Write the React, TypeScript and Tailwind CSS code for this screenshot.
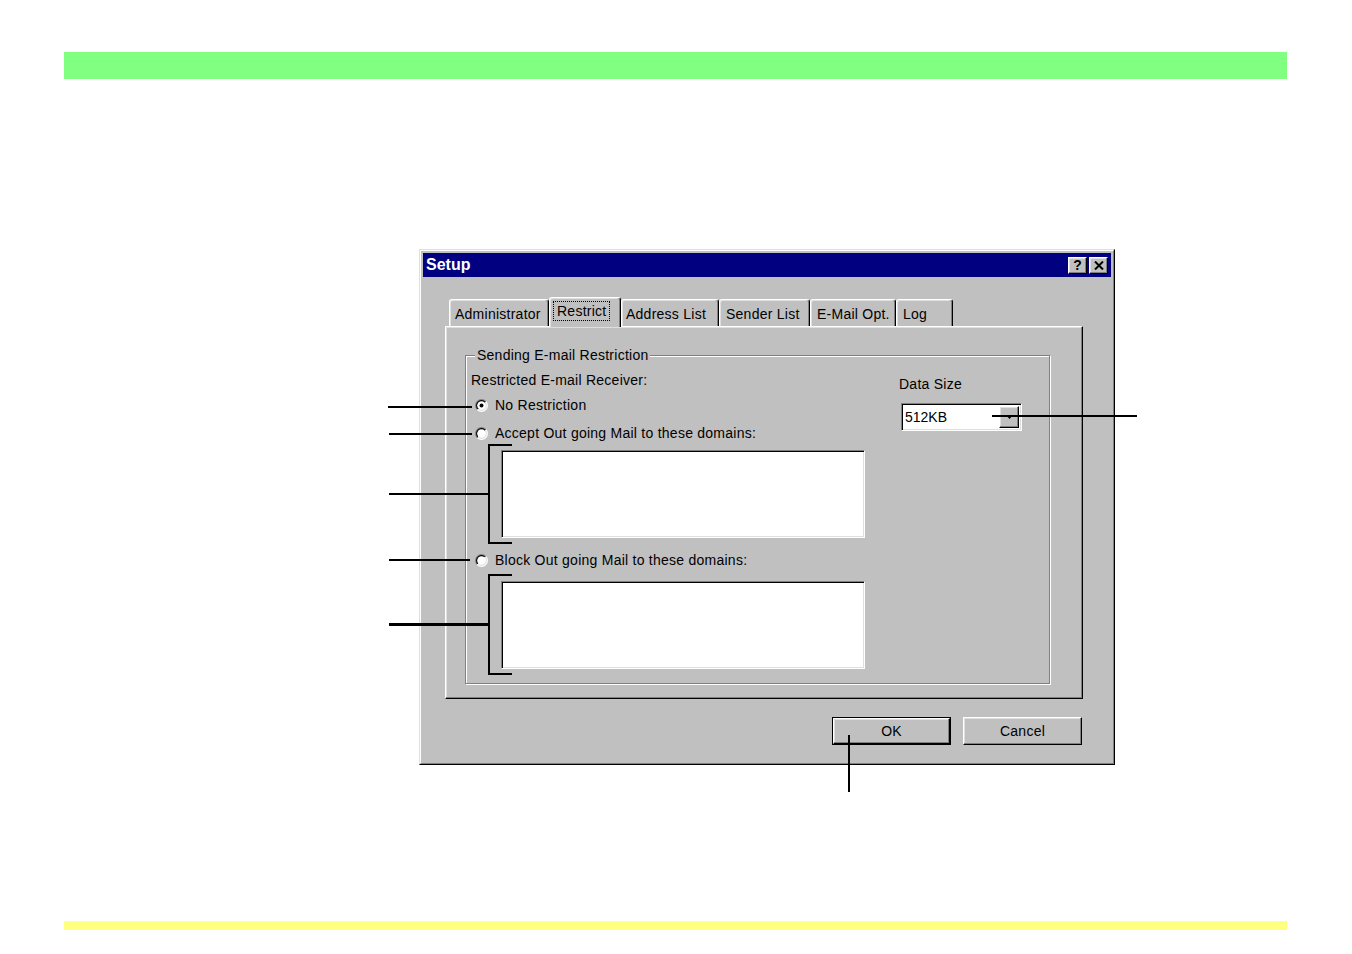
import { FC, ReactNode } from "react";

const raised = "border border-t-white border-l-white border-r-black border-b-black shadow-[inset_-1px_-1px_0_#808080,inset_1px_1px_0_#dfdfdf]";
const sunken = "border border-t-[#808080] border-l-[#808080] border-r-white border-b-white shadow-[inset_1px_1px_0_#000,inset_-1px_-1px_0_#dfdfdf]";

const Radio: FC<{ checked?: boolean; label: string }> = ({ checked = false, label }) => (
  <div className="flex items-center h-[20px]">
    <svg width="13" height="13" viewBox="0 0 12 12" className="ml-[4px] shrink-0">
      <defs>
        <linearGradient id="radio-outer" x1="0" y1="0" x2="1" y2="1">
          <stop offset="0.5" stopColor="#808080" />
          <stop offset="0.5" stopColor="#ffffff" />
        </linearGradient>
        <linearGradient id="radio-inner" x1="0" y1="0" x2="1" y2="1">
          <stop offset="0.5" stopColor="#000000" />
          <stop offset="0.5" stopColor="#dfdfdf" />
        </linearGradient>
      </defs>
      <circle cx="6" cy="6" r="6" fill="url(#radio-outer)" />
      <circle cx="6" cy="6" r="5" fill="url(#radio-inner)" />
      <circle cx="6" cy="6" r="4" fill="#ffffff" />
      {checked && <circle cx="6" cy="6" r="1.8" fill="#000000" />}
    </svg>
    <span className="ml-[7px] leading-[16px]">{label}</span>
  </div>
);

const Tab: FC<{ label: string; width: string; pad: string; selected?: boolean }> = ({ label, width, pad, selected }) => {
  if (selected) {
    return (
      <div className={`relative z-10 ${width} h-[30px] -mb-[1px] bg-[#c0c0c0] rounded-t-[3px] border-l border-t border-white border-r border-r-black shadow-[inset_-1px_0_0_#808080,inset_1px_1px_0_#dfdfdf] flex items-start pt-[3px] ${pad}`}>
        <span className="border border-dotted border-black px-[3px] leading-[18px]">{label}</span>
      </div>
    );
  }
  return (
    <div className={`${width} h-[27px] rounded-t-[3px] border-l border-t border-white border-r border-r-black shadow-[inset_-1px_0_0_#808080,inset_1px_1px_0_#dfdfdf] flex items-center pt-[2px] ${pad}`}>
      <span className="leading-[16px]">{label}</span>
    </div>
  );
};

const Line: FC<{ className: string }> = ({ className }) => <div className={`absolute bg-black ${className}`} />;

const Button: FC<{ label: string; isDefault?: boolean }> = ({ label, isDefault }) => (
  <div className={`w-[119px] h-[28px] ${isDefault ? "border border-black" : ""}`}>
    <div className={`w-full h-full ${raised} flex items-center justify-center text-[14px]`}>{label}</div>
  </div>
);

const Annotations: FC = () => (
  <>
    <Line className="left-[388px] top-[406px] w-[84px] h-[2px]" />
    <Line className="left-[389px] top-[433px] w-[83px] h-[2px]" />
    <Line className="left-[389px] top-[493px] w-[101px] h-[2px]" />
    <Line className="left-[488px] top-[444px] w-[2px] h-[100px]" />
    <Line className="left-[488px] top-[444px] w-[24px] h-[2px]" />
    <Line className="left-[488px] top-[542px] w-[24px] h-[2px]" />
    <Line className="left-[389px] top-[559px] w-[81px] h-[2px]" />
    <Line className="left-[389px] top-[623px] w-[101px] h-[3px]" />
    <Line className="left-[488px] top-[574px] w-[2px] h-[101px]" />
    <Line className="left-[488px] top-[574px] w-[24px] h-[2px]" />
    <Line className="left-[488px] top-[673px] w-[24px] h-[2px]" />
    <Line className="left-[992px] top-[415px] w-[145px] h-[2px]" />
    <Line className="left-[848px] top-[735px] w-[2px] h-[57px]" />
  </>
);

const TitleButton: FC<{ children: ReactNode }> = ({ children }) => (
  <div className={`w-[19px] h-[17px] bg-[#c0c0c0] ${raised} flex items-center justify-center`}>{children}</div>
);

const Dialog: FC = () => (
  <div className="ml-[419px] mt-[170px] w-[696px] h-[516px] bg-[#c0c0c0] border border-t-[#dfdfdf] border-l-[#dfdfdf] border-r-black border-b-black">
    <div className="w-full h-full border border-t-white border-l-white border-r-[#808080] border-b-[#808080] p-[2px] flex flex-col">
      <div className="h-[24px] bg-[#000080] flex items-center justify-between pl-[3px] pr-[3px]">
        <span className="text-white font-bold text-[16px] leading-[18px] tracking-normal">Setup</span>
        <div className="flex gap-[2px]">
          <TitleButton>
            <span className="font-bold text-[14px] leading-[14px] text-black tracking-normal">?</span>
          </TitleButton>
          <TitleButton>
            <svg width="10" height="9" viewBox="0 0 10 9">
              <path d="M1 0.5 L9 8.5 M9 0.5 L1 8.5" stroke="#000" strokeWidth="2" />
            </svg>
          </TitleButton>
        </div>
      </div>

      <div className="pl-[22px] pr-[28px] pt-[19px]">
        <div className="flex items-end h-[30px] pl-[4px]">
          <Tab label="Administrator" width="w-[100px]" pad="pl-[5px]" />
          <Tab label="Restrict" width="w-[72px]" pad="pl-[3px]" selected />
          <Tab label="Address List" width="w-[98px]" pad="pl-[4px]" />
          <Tab label="Sender List" width="w-[91px]" pad="pl-[6px]" />
          <Tab label="E-Mail Opt." width="w-[86px]" pad="pl-[6px]" />
          <Tab label="Log" width="w-[57px]" pad="pl-[6px]" />
        </div>

        <div className="h-[373px] border border-t-white border-l-white border-r-black border-b-black shadow-[inset_-1px_-1px_0_#808080,inset_1px_1px_0_#dfdfdf] pl-[19px] pt-[28px]">
          <div className="relative w-[585px] h-[329px] border border-[#808080] shadow-[1px_1px_0_#ffffff,inset_1px_1px_0_#ffffff] flex">
            <span className="absolute -top-[9px] left-[9px] bg-[#c0c0c0] px-[2px] leading-[16px]">Sending E-mail Restriction</span>

            <div className="w-[428px] pl-[5px] pt-[16px] flex flex-col">
              <span className="leading-[16px]">Restricted E-mail Receiver:</span>
              <div className="mt-[7px]">
                <Radio checked label="No Restriction" />
              </div>
              <div className="mt-[8px]">
                <Radio label="Accept Out going Mail to these domains:" />
              </div>
              <div className={`mt-[7px] ml-[30px] w-[364px] h-[88px] bg-white ${sunken}`} />
              <div className="mt-[12px]">
                <Radio label="Block Out going Mail to these domains:" />
              </div>
              <div className={`mt-[11px] ml-[30px] w-[364px] h-[88px] bg-white ${sunken}`} />
            </div>

            <div className="flex flex-col pt-[20px] pl-[5px]">
              <span className="leading-[16px]">Data Size</span>
              <div className={`mt-[11px] ml-[2px] w-[121px] h-[28px] bg-white ${sunken} flex items-center p-[2px]`}>
                <span className="flex-1 pl-[1px] text-[14px] leading-[16px] tracking-normal">512KB</span>
                <div className={`w-[20px] h-full bg-[#c0c0c0] ${raised} flex items-center justify-center`}>
                  <svg width="7" height="4" viewBox="0 0 7 4">
                    <path d="M0 0 H7 L3.5 4 Z" fill="#000" />
                  </svg>
                </div>
              </div>
            </div>
          </div>
        </div>

        <div className="flex justify-end gap-[12px] mt-[18px] pr-[1px]">
          <Button label="OK" isDefault />
          <Button label="Cancel" />
        </div>
      </div>
    </div>
  </div>
);

export default function App() {
  return (
    <div className="relative w-[1352px] h-[954px] bg-white overflow-hidden text-black text-[14px] tracking-[0.25px] font-['Liberation_Sans',Arial,sans-serif]">
      <div className="h-[52px]" />
      <div className="ml-[64px] mr-[65px] h-[27px] bg-[#80ff80]" />
      <Dialog />
      <div className="ml-[64px] mr-[65px] mt-[156px] h-[9px] bg-[#ffff80]" />
      <Annotations />
    </div>
  );
}
